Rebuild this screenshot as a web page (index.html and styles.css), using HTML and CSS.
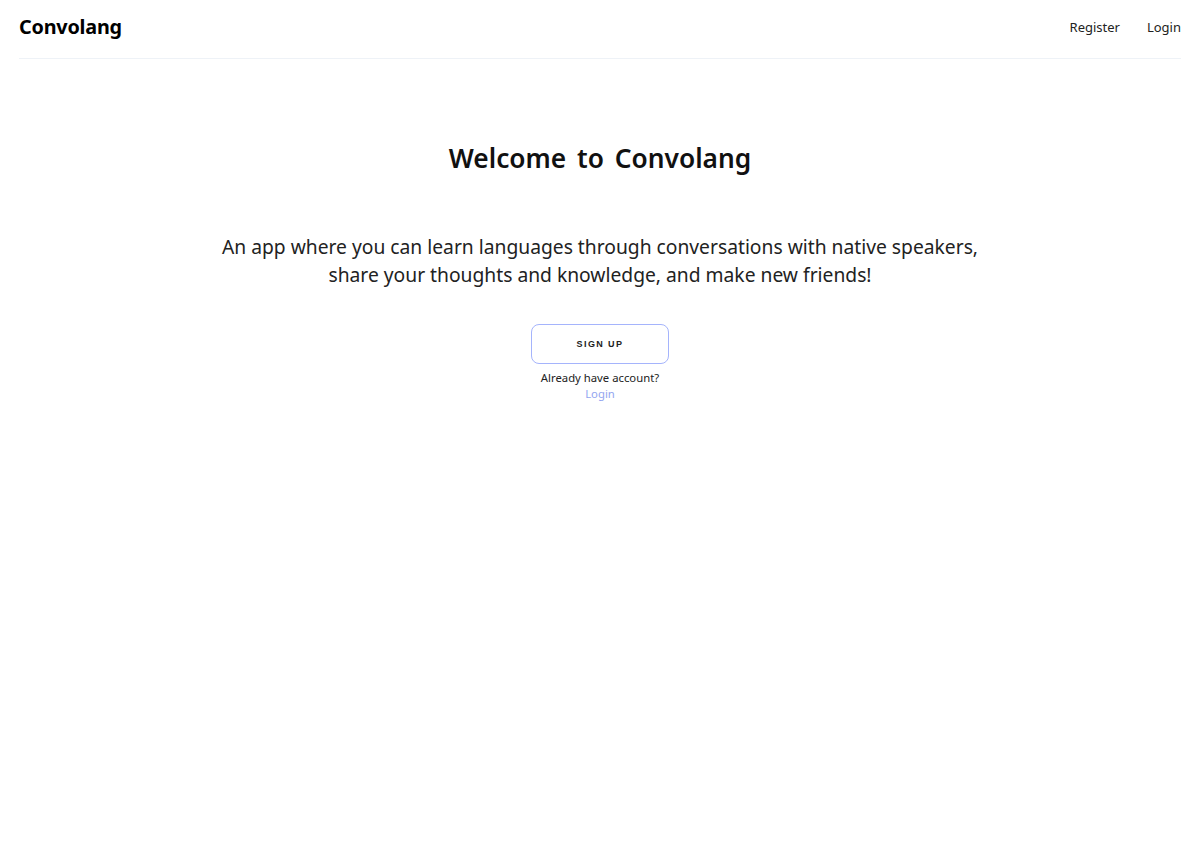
FILE: index.html
```html
<!DOCTYPE html>
<html>
<head>
<meta charset="utf-8">
<link rel="stylesheet" href="styles.css">
</head>
<body>
<header class="nav">
  <div class="brand">Convolang</div>
  <nav class="links">
    <a href="#" class="link">Register</a>
    <a href="#" class="link">Login</a>
  </nav>
</header>
<main class="hero">
  <h1 class="title">Welcome to Convolang</h1>
  <p class="lead">An app where you can learn languages through conversations with native speakers,<br>share your thoughts and knowledge, and make new friends!</p>
  <button class="signup">SIGN UP</button>
  <div class="already">Already have account?</div>
  <a href="#" class="login">Login</a>
</main>
</body>
</html>
```
FILE: styles.css
```css
html, body { margin: 0; padding: 0; background: #fff; }
body { font-family: "Noto Sans", "Open Sans", sans-serif; color: #111; }
.nav {
  margin: 0 19px;
  height: 59px;
  padding-bottom: 5px;
  box-sizing: border-box;
  border-bottom: 1px solid #eef2f7;
  display: flex;
  align-items: center;
  justify-content: space-between;
}
.brand { font-size: 19.8px; font-weight: 700; color: #000; letter-spacing: -0.2px; }
.links { display: flex; gap: 27px; }
.link { font-size: 13px; color: #222; text-decoration: none; }
.hero { display: flex; flex-direction: column; align-items: center; text-align: center; }
.title { margin: 81px 0 0; font-size: 26.3px; font-weight: 600; word-spacing: 4px; line-height: 36px; color: #111; }
.lead { margin: 57px 0 0; font-size: 19.26px; line-height: 28px; color: #222; }
.signup {
  margin-top: 35px;
  width: 138px; height: 40px;
  border: 1px solid #a5b4fc; border-radius: 8px;
  background: #fff;
  font-family: "Liberation Sans", Arial, sans-serif;
  font-size: 9px; font-weight: 700; letter-spacing: 1.4px; color: #222;
}
.already { margin-top: 6px; font-size: 11.3px; line-height: 16px; color: #222; }
.login { font-size: 11.3px; line-height: 16px; color: #93a5f0; text-decoration: none; }
```
